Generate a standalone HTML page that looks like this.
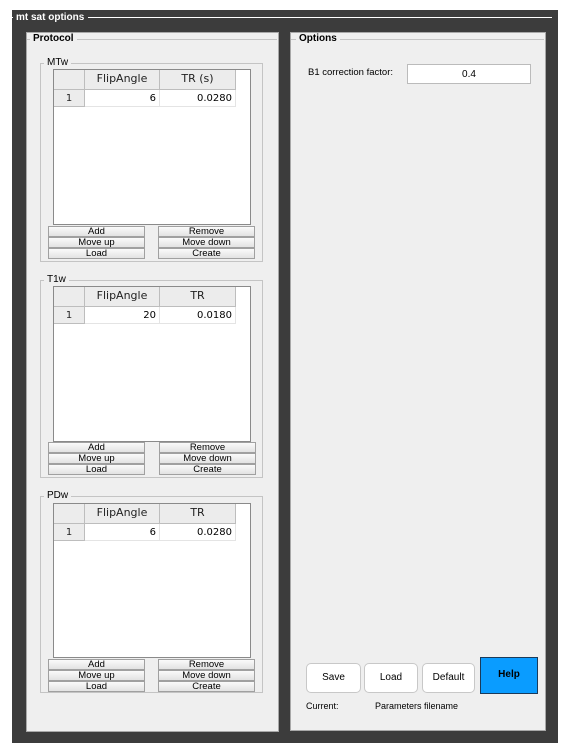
<!DOCTYPE html>
<html><head><style>
body{margin:0;width:569px;height:755px;background:#fff;position:relative;overflow:hidden;font-family:"Liberation Sans",sans-serif;}
.a{position:absolute;box-sizing:border-box;}
.dark{left:12px;top:10px;width:546px;height:733px;background:#3c3c3c;}
.panel{background:#efefef;border:1px solid #a8a8a8;}
.fs{border:1px solid #c4c4c4;}
.lbl{position:absolute;background:#efefef;font-size:10px;font-weight:bold;padding:0 3px;line-height:10px;color:#000;}
.tbl{background:#fff;border:1px solid #8a8a8a;}
.hd{background:#ececec;border-right:1px solid #bdbdbd;border-bottom:1px solid #bdbdbd;font-size:11px;text-align:center;line-height:18px;color:#222;font-family:"DejaVu Sans",sans-serif;}
.cell{font-size:10px;line-height:17px;text-align:right;padding-right:3px;border-right:1px solid #e4e4e4;border-bottom:1px solid #e4e4e4;font-family:"DejaVu Sans",sans-serif;}
.btn{background:linear-gradient(#fafafa,#e2e2e2);border:1px solid #a0a0a0;font-size:9.5px;text-align:center;line-height:9px;color:#000;}
.rb{background:#fff;border:1px solid #c8c8c8;border-radius:5px;font-size:10px;text-align:center;line-height:28px;}
</style></head><body>
<div class="a dark"></div>
<div class="a" style="left:12px;top:17px;width:540px;height:1px;background:#fff"></div>
<div class="a" style="left:13px;top:12px;background:#3c3c3c;color:#fff;font-size:10px;font-weight:bold;padding:0 4px 0 3px;line-height:11px">mt sat options</div>

<div class="a panel" style="left:26px;top:32px;width:253px;height:700px"></div>
<div class="a" style="left:27px;top:39px;width:250px;height:1px;background:#c4c4c4"></div>
<div class="lbl" style="left:30px;top:34px">Protocol</div>

<div class="a panel" style="left:290px;top:32px;width:256px;height:699px"></div>
<div class="a" style="left:291px;top:39px;width:253px;height:1px;background:#c4c4c4"></div>
<div class="lbl" style="left:296px;top:34px">Options</div>

<div class="a" style="left:308px;top:67px;font-size:9.5px">B1 correction factor:</div>
<div class="a" style="left:407px;top:64px;width:124px;height:20px;background:#fff;border:1px solid #bbb;font-size:10px;text-align:center;line-height:19px">0.4</div>

<div class="a rb" style="left:306px;top:663px;width:55px;height:30px">Save</div>
<div class="a rb" style="left:364px;top:663px;width:54px;height:30px">Load</div>
<div class="a rb" style="left:422px;top:663px;width:53px;height:30px">Default</div>
<div class="a" style="left:480px;top:657px;width:58px;height:37px;background:#0a9cff;border:1px solid #1a3a5a;font-size:10px;font-weight:bold;text-align:center;line-height:34px">Help</div>
<div class="a" style="left:306px;top:701px;font-size:9px">Current:</div>
<div class="a" style="left:375px;top:701px;font-size:9px">Parameters filename</div>

<!-- MTw -->
<div class="a fs" style="left:40px;top:63px;width:223px;height:199px"></div>
<div class="lbl" style="left:44px;top:58px;font-weight:normal;font-size:10px">MTw</div>
<div class="a tbl" style="left:53px;top:69px;width:198px;height:156px"></div>
<div class="a hd" style="left:54px;top:70px;width:31px;height:20px"></div>
<div class="a hd" style="left:85px;top:70px;width:75px;height:20px">FlipAngle</div>
<div class="a hd" style="left:160px;top:70px;width:76px;height:20px">TR (s)</div>
<div class="a hd" style="left:54px;top:90px;width:31px;height:17px;line-height:17px;font-size:10px">1</div>
<div class="a cell" style="left:85px;top:90px;width:75px;height:17px">6</div>
<div class="a cell" style="left:160px;top:90px;width:76px;height:17px">0.0280</div>
<div class="a btn" style="left:48px;top:226px;width:97px;height:11px">Add</div>
<div class="a btn" style="left:158px;top:226px;width:97px;height:11px">Remove</div>
<div class="a btn" style="left:48px;top:237px;width:97px;height:11px">Move up</div>
<div class="a btn" style="left:158px;top:237px;width:97px;height:11px">Move down</div>
<div class="a btn" style="left:48px;top:248px;width:97px;height:11px">Load</div>
<div class="a btn" style="left:158px;top:248px;width:97px;height:11px">Create</div>

<!-- T1w -->
<div class="a fs" style="left:40px;top:280px;width:223px;height:198px"></div>
<div class="lbl" style="left:44px;top:275px;font-weight:normal">T1w</div>
<div class="a tbl" style="left:53px;top:286px;width:198px;height:156px"></div>
<div class="a hd" style="left:54px;top:287px;width:31px;height:20px"></div>
<div class="a hd" style="left:85px;top:287px;width:75px;height:20px">FlipAngle</div>
<div class="a hd" style="left:160px;top:287px;width:76px;height:20px">TR</div>
<div class="a hd" style="left:54px;top:307px;width:31px;height:17px;line-height:17px;font-size:10px">1</div>
<div class="a cell" style="left:85px;top:307px;width:75px;height:17px">20</div>
<div class="a cell" style="left:160px;top:307px;width:76px;height:17px">0.0180</div>
<div class="a btn" style="left:48px;top:442px;width:97px;height:11px">Add</div>
<div class="a btn" style="left:159px;top:442px;width:97px;height:11px">Remove</div>
<div class="a btn" style="left:48px;top:453px;width:97px;height:11px">Move up</div>
<div class="a btn" style="left:159px;top:453px;width:97px;height:11px">Move down</div>
<div class="a btn" style="left:48px;top:464px;width:97px;height:11px">Load</div>
<div class="a btn" style="left:159px;top:464px;width:97px;height:11px">Create</div>

<!-- PDw -->
<div class="a fs" style="left:40px;top:496px;width:223px;height:197px"></div>
<div class="lbl" style="left:44px;top:491px;font-weight:normal">PDw</div>
<div class="a tbl" style="left:53px;top:503px;width:198px;height:155px"></div>
<div class="a hd" style="left:54px;top:504px;width:31px;height:20px"></div>
<div class="a hd" style="left:85px;top:504px;width:75px;height:20px">FlipAngle</div>
<div class="a hd" style="left:160px;top:504px;width:76px;height:20px">TR</div>
<div class="a hd" style="left:54px;top:524px;width:31px;height:17px;line-height:17px;font-size:10px">1</div>
<div class="a cell" style="left:85px;top:524px;width:75px;height:17px">6</div>
<div class="a cell" style="left:160px;top:524px;width:76px;height:17px">0.0280</div>
<div class="a btn" style="left:48px;top:659px;width:97px;height:11px">Add</div>
<div class="a btn" style="left:158px;top:659px;width:97px;height:11px">Remove</div>
<div class="a btn" style="left:48px;top:670px;width:97px;height:11px">Move up</div>
<div class="a btn" style="left:158px;top:670px;width:97px;height:11px">Move down</div>
<div class="a btn" style="left:48px;top:681px;width:97px;height:11px">Load</div>
<div class="a btn" style="left:158px;top:681px;width:97px;height:11px">Create</div>
</body></html>
